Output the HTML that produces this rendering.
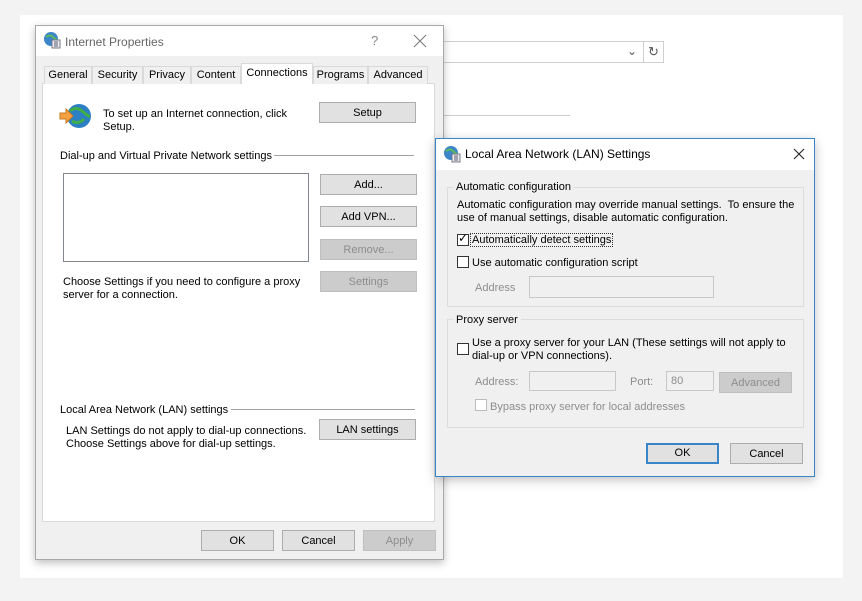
<!DOCTYPE html>
<html><head><meta charset="utf-8"><style>
*{box-sizing:border-box;margin:0;padding:0}
body{width:862px;height:601px;background:#f3f3f3;position:relative;overflow:hidden;font-family:"Liberation Sans",sans-serif;font-size:11px;color:#000}
.a{position:absolute}
.btn{position:absolute;background:#e1e1e1;border:1px solid #adadad;text-align:center;line-height:20px;font-size:11px}
.dis{color:#8d8d8d;background:#cccccc;border-color:#bfbfbf}
.tab{position:absolute;top:66px;height:18px;border:1px solid #d9d9d9;border-bottom:none;background:#f0f0f0;text-align:center;line-height:16px;font-size:11px}
.line{position:absolute;height:1px;background:#a0a0a0}
.grp{position:absolute;border:1px solid #dcdcdc}
.cb{position:absolute;width:12px;height:12px;border:1px solid #333;background:#fff}
.cbd{border-color:#bcbcbc}
.in{position:absolute;border:1px solid #c8c8c8;background:#f0f0f0}
.g{color:#8d8d8d}
</style></head><body>
<div class="a" style="left:20px;top:15px;width:823px;height:563px;background:#fff"></div>
<div class="a" style="left:440px;top:41px;width:224px;height:22px;border:1px solid #d0d0d0;border-left:none"></div>
<div class="a" style="left:643px;top:41px;width:1px;height:22px;background:#d0d0d0"></div>
<div class="a" style="left:627px;top:44px;font-size:12px;color:#555">⌄</div>
<div class="a" style="left:648px;top:44px;font-size:13px;color:#555">↻</div>
<div class="a" style="left:443px;top:115px;width:127px;height:1px;background:#ccc"></div>

<!-- Internet Properties -->
<div class="a" style="left:35px;top:25px;width:409px;height:535px;background:#f0f0f0;border:1px solid #a8a8a8;box-shadow:0 3px 8px rgba(0,0,0,.25)"></div>
<div class="a" style="left:36px;top:26px;width:407px;height:30px;background:#fff"></div>
<svg class="a" style="left:43px;top:31px" width="18" height="18"><circle cx="8" cy="8" r="7" fill="#3a86c8"/><path d="M3 6q4-3 7 0t4 2" stroke="#5cb85c" stroke-width="2" fill="none"/><rect x="9" y="9" width="8" height="8" fill="#eee" stroke="#778"/><path d="M11 11h4M11 13h4M11 15h4" stroke="#557"/></svg>
<div class="a" style="left:65px;top:35px;font-size:12px;color:#666">Internet Properties</div>
<div class="a" style="left:371px;top:33px;font-size:13px;color:#888">?</div>
<svg class="a" style="left:413px;top:34px" width="14" height="14"><path d="M1 1L13 13M13 1L1 13" stroke="#777" stroke-width="1"/></svg>

<div class="a" style="left:42px;top:83px;width:393px;height:439px;background:#fff;border:1px solid #d9d9d9"></div>
<div class="tab" style="left:44px;width:48px">General</div>
<div class="tab" style="left:92px;width:51px">Security</div>
<div class="tab" style="left:143px;width:48px">Privacy</div>
<div class="tab" style="left:191px;width:50px">Content</div>
<div class="tab" style="left:241px;top:63px;height:21px;width:72px;background:#fff;line-height:18px">Connections</div>
<div class="tab" style="left:313px;width:55px">Programs</div>
<div class="tab" style="left:368px;width:60px">Advanced</div>

<svg class="a" style="left:58px;top:101px" width="36" height="30"><circle cx="21" cy="15" r="12" fill="#2d7fc4"/><path d="M12 10q6-5 12 0t8 6M14 20q6 4 12-2" stroke="#3fae4a" stroke-width="3" fill="none"/><path d="M2 12h6v-4l7 7-7 7v-4H2z" fill="#f5a142" stroke="#c77a20"/></svg>
<div class="a" style="left:103px;top:108px;line-height:13px">To set up an Internet connection, click<br>Setup.</div>
<div class="btn" style="left:319px;top:102px;width:97px;height:21px">Setup</div>
<div class="a" style="left:60px;top:150px">Dial-up and Virtual Private Network settings</div>
<div class="line" style="left:274px;top:155px;width:140px"></div>
<div class="a" style="left:63px;top:173px;width:246px;height:89px;border:1px solid #828790"></div>
<div class="btn" style="left:320px;top:174px;width:97px;height:21px">Add...</div>
<div class="btn" style="left:320px;top:206px;width:97px;height:21px">Add VPN...</div>
<div class="btn dis" style="left:320px;top:239px;width:97px;height:21px">Remove...</div>
<div class="btn dis" style="left:320px;top:271px;width:97px;height:21px">Settings</div>
<div class="a" style="left:63px;top:276px;line-height:13px">Choose Settings if you need to configure a proxy<br>server for a connection.</div>
<div class="a" style="left:60px;top:404px">Local Area Network (LAN) settings</div>
<div class="line" style="left:231px;top:409px;width:184px"></div>
<div class="a" style="left:66px;top:425px;line-height:13px">LAN Settings do not apply to dial-up connections.<br>Choose Settings above for dial-up settings.</div>
<div class="btn" style="left:319px;top:419px;width:97px;height:21px">LAN settings</div>
<div class="btn" style="left:201px;top:530px;width:73px;height:21px">OK</div>
<div class="btn" style="left:282px;top:530px;width:73px;height:21px">Cancel</div>
<div class="btn dis" style="left:363px;top:530px;width:73px;height:21px">Apply</div>

<!-- LAN dialog -->
<div class="a" style="left:435px;top:138px;width:380px;height:339px;background:#f0f0f0;border:1px solid #3a84c8;box-shadow:0 3px 10px rgba(0,0,0,.25)"></div>
<div class="a" style="left:436px;top:139px;width:378px;height:31px;background:#fff"></div>
<svg class="a" style="left:443px;top:145px" width="18" height="18"><circle cx="8" cy="8" r="7" fill="#3a86c8"/><path d="M3 6q4-3 7 0t4 2" stroke="#5cb85c" stroke-width="2" fill="none"/><rect x="9" y="9" width="8" height="8" fill="#eee" stroke="#778"/><path d="M11 11h4M11 13h4M11 15h4" stroke="#557"/></svg>
<div class="a" style="left:465px;top:147px;font-size:12px">Local Area Network (LAN) Settings</div>
<svg class="a" style="left:793px;top:148px" width="12" height="12"><path d="M1 1L11 11M11 1L1 11" stroke="#222" stroke-width="1.1"/></svg>

<div class="grp" style="left:447px;top:187px;width:357px;height:120px"></div>
<div class="a" style="left:453px;top:181px;background:#f0f0f0;padding:0 3px">Automatic configuration</div>
<div class="a" style="left:457px;top:199px;line-height:13px">Automatic configuration may override manual settings.&nbsp; To ensure the<br>use of manual settings, disable automatic configuration.</div>
<div class="cb" style="left:457px;top:234px"></div>
<div class="a" style="left:458px;top:231px;font-size:12px">✓</div>
<div class="a" style="left:471px;top:234px;outline:1px dotted #333;padding:0 1px">Automatically detect settings</div>
<div class="cb" style="left:457px;top:256px"></div>
<div class="a" style="left:472px;top:257px">Use automatic configuration script</div>
<div class="a g" style="left:475px;top:282px">Address</div>
<div class="in" style="left:529px;top:276px;width:185px;height:22px"></div>

<div class="grp" style="left:447px;top:319px;width:357px;height:109px"></div>
<div class="a" style="left:453px;top:314px;background:#f0f0f0;padding:0 3px">Proxy server</div>
<div class="cb" style="left:457px;top:343px"></div>
<div class="a" style="left:472px;top:337px;line-height:13px">Use a proxy server for your LAN (These settings will not apply to<br>dial-up or VPN connections).</div>
<div class="a g" style="left:475px;top:376px">Address:</div>
<div class="in" style="left:529px;top:371px;width:87px;height:20px"></div>
<div class="a g" style="left:630px;top:376px">Port:</div>
<div class="in" style="left:666px;top:371px;width:48px;height:20px;padding:3px 4px" ><span class="g">80</span></div>
<div class="btn dis" style="left:719px;top:372px;width:73px;height:21px">Advanced</div>
<div class="cb cbd" style="left:475px;top:399px"></div>
<div class="a g" style="left:490px;top:401px">Bypass proxy server for local addresses</div>

<div class="btn" style="left:646px;top:443px;width:73px;height:21px;border:2px solid #3a84c8;line-height:17px">OK</div>
<div class="btn" style="left:730px;top:443px;width:73px;height:21px">Cancel</div>
</body></html>
